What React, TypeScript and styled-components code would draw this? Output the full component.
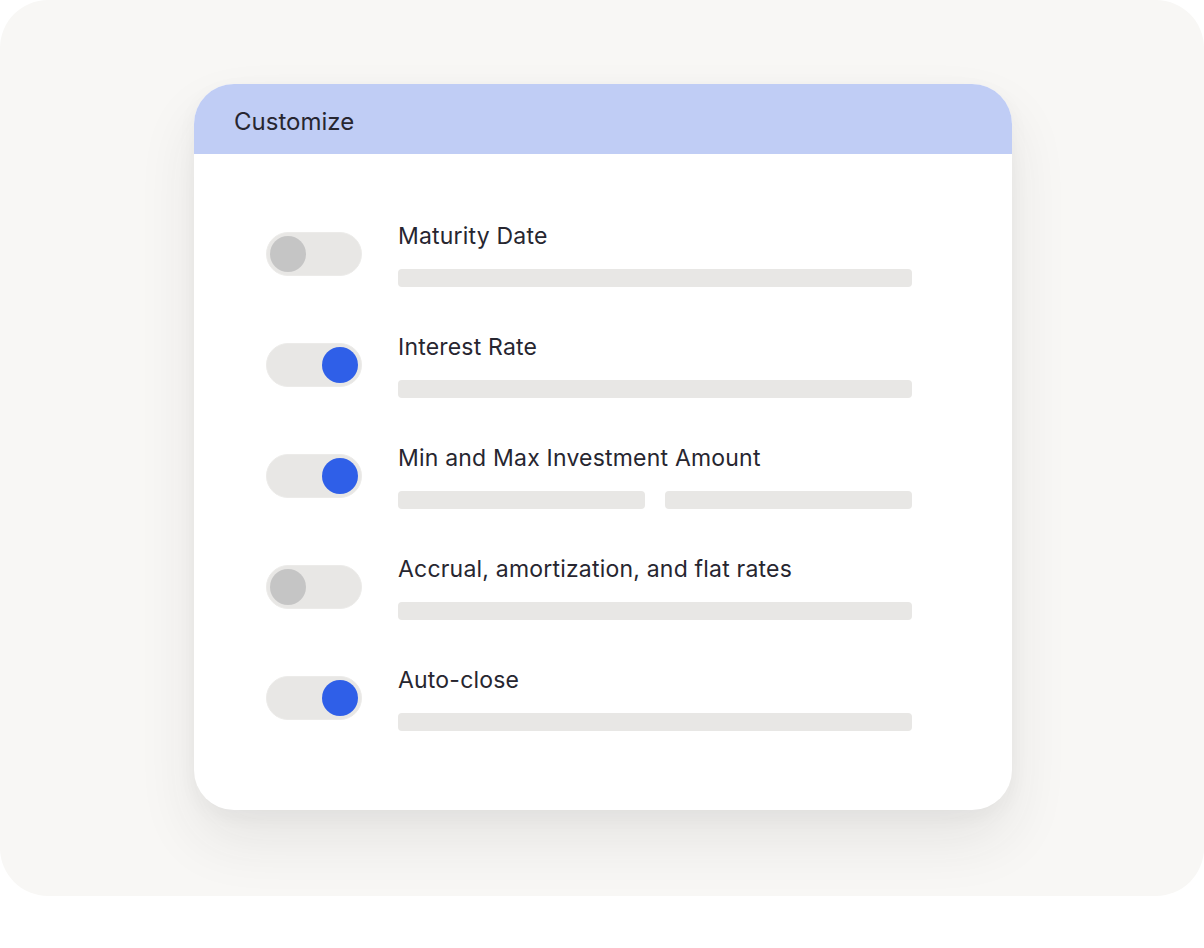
import React from "react";
import styled, { createGlobalStyle } from "styled-components";

const GlobalStyle = createGlobalStyle`
  body {
    margin: 0;
    background: #ffffff;
    font-family: Inter, "Noto Sans", sans-serif;
  }
`;

const Backdrop = styled.div`
  width: 1204px;
  height: 896px;
  background: #f8f7f5;
  border-radius: 48px;
  display: flex;
  padding: 84px 0 0 194px;
  box-sizing: border-box;
`;

const Card = styled.div`
  width: 818px;
  height: 726px;
  background: #ffffff;
  border-radius: 40px;
  overflow: hidden;
  box-shadow: 0 30px 60px rgba(40, 40, 40, 0.09), 0 6px 20px rgba(40, 40, 40, 0.04);
  display: flex;
  flex-direction: column;
`;

const Header = styled.div`
  height: 70px;
  background: #c0cdf5;
  display: flex;
  align-items: center;
  padding: 4px 0 0 40px;
  box-sizing: border-box;
  font-size: 24px;
  color: #272630;
`;

const Body = styled.div`
  padding: 68px 100px 0 72px;
  display: flex;
  flex-direction: column;
  gap: 46px;
`;

const Row = styled.div`
  display: flex;
  gap: 36px;
`;

const Track = styled.div<{ $on: boolean }>`
  width: 96px;
  height: 44px;
  margin-top: 10px;
  border-radius: 22px;
  background: #e8e7e5;
  border: 1px solid #ecebe9;
  display: flex;
  align-items: center;
  justify-content: ${(p) => (p.$on ? "flex-end" : "flex-start")};
  padding: 0 3px;
  box-sizing: border-box;
  flex-shrink: 0;
`;

const Knob = styled.div<{ $on: boolean }>`
  width: 36px;
  height: 36px;
  border-radius: 50%;
  background: ${(p) => (p.$on ? "#2f5fe8" : "#c5c5c5")};
`;

const Content = styled.div`
  flex: 1;
  display: flex;
  flex-direction: column;
`;

const Label = styled.div`
  font-size: 23px;
  line-height: 28px;
  letter-spacing: 0.2px;
  color: #272630;
`;

const Bars = styled.div`
  display: flex;
  gap: 20px;
  margin-top: 19px;
`;

const Bar = styled.div`
  flex: 1;
  height: 18px;
  border-radius: 4px;
  background: #e8e7e5;
`;

const rows = [
  { label: "Maturity Date", on: false, bars: 1 },
  { label: "Interest Rate", on: true, bars: 1 },
  { label: "Min and Max Investment Amount", on: true, bars: 2 },
  { label: "Accrual, amortization, and flat rates", on: false, bars: 1 },
  { label: "Auto-close", on: true, bars: 1 },
];

export default function App() {
  return (
    <>
      <GlobalStyle />
      <Backdrop>
        <Card>
          <Header>Customize</Header>
          <Body>
            {rows.map((r) => (
              <Row key={r.label}>
                <Track $on={r.on}>
                  <Knob $on={r.on} />
                </Track>
                <Content>
                  <Label>{r.label}</Label>
                  <Bars>
                    {Array.from({ length: r.bars }).map((_, i) => (
                      <Bar key={i} />
                    ))}
                  </Bars>
                </Content>
              </Row>
            ))}
          </Body>
        </Card>
      </Backdrop>
    </>
  );
}
